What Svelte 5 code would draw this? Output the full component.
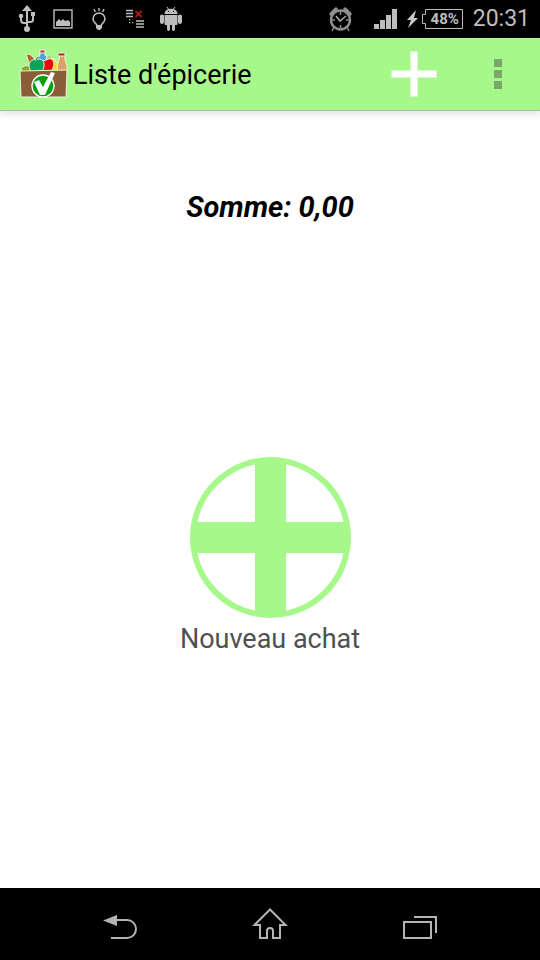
<script lang="ts">
  let total = $state(0);

  let formattedTotal = $derived(total.toFixed(2).replace(".", ","));
</script>

<div class="screen">
  <header class="status-bar">
    <div class="notifications">
      <svg class="status-icon" viewBox="0 0 24 24" aria-label="USB">
        <path d="M12 3v19M6 9v4q0 3 3 3h3M18 8v5q0 2-3 2h-3" fill="none" stroke="#bebebe" stroke-width="2" />
        <path d="M12-2 7 4h10z" fill="#bebebe" />
        <circle cx="6" cy="9" r="2.3" fill="#bebebe" />
        <path d="M16 5h4v4h-4z" fill="#bebebe" />
        <circle cx="12" cy="22" r="3" fill="#bebebe" />
      </svg>
      <svg class="status-icon" viewBox="0 0 24 24" aria-label="Image">
        <rect x="3" y="3" width="18" height="18" fill="none" stroke="#bebebe" stroke-width="1.4" />
        <path d="M5 19v-4l3-3 2 2 2-2 2 2 3-1 2 2v4z" fill="#bebebe" />
      </svg>
      <svg class="status-icon" viewBox="0 0 24 24" aria-label="Lampe">
        <path d="M10 19c0-3-4-3-4-7a6 6 0 0 1 12 0c0 4-4 4-4 7" fill="none" stroke="#bebebe" stroke-width="1.6" />
        <path d="M9 18h6v3l-2 2h-2l-2-2zM11.3 1h1.4v3h-1.4z" fill="#bebebe" />
        <path d="m7 2 1.3 3M17 2l-1.3 3" stroke="#bebebe" stroke-width="1.4" />
      </svg>
      <svg class="status-icon" viewBox="0 0 24 24" aria-label="Liste">
        <path d="M3 3.5h7M3 6.5h7M3 9.5h7M13 14h8M13 17h8M13 20h8" stroke="#bebebe" stroke-width="1.3" />
        <path d="m12.500 4 6 6M18.500 4l-6 6" stroke="#b01c1c" stroke-width="1.8" />
        <path d="M6 12h1.300v1.300H6zM6 15h1.300v1.300H6zM9 15h1.300v1.300H9z" fill="#bebebe" />
      </svg>
      <svg class="status-icon" viewBox="0 0 24 24" aria-label="Android">
        <path d="M5.5 7c0-7 13-7 13 0z" fill="#bebebe" />
        <path d="m8 0 2 3M16 0l-2 3" stroke="#bebebe" />
        <path d="M5.5 8h13v9q0 1-1 1H16v4q0 2-1.500 2T13 22v-4h-2v4q0 2-1.500 2T8 22v-4H6.500q-1 0-1-1zM1 9q0-1.500 2-1.500T5 9v6q0 2-2 2t-2-2zM19 9q0-1.500 2-1.500T23 9v6q0 2-2 2t-2-2z" fill="#bebebe" />
        <path d="M9 4h1v1H9zM14 4h1v1h-1z" fill="#000" />
      </svg>
    </div>

    <div class="system">
      <svg class="status-icon alarm" viewBox="0 0 24 24" aria-label="Alarme">
        <circle cx="12.500" cy="13" r="9.500" fill="none" stroke="#8f8f8f" stroke-width="2.400" />
        <path d="M3 7 8 2M22 7l-5-5" fill="none" stroke="#8f8f8f" stroke-width="3.500" stroke-linecap="round" />
        <path d="m6 20-2 4M19 20l2 4M12.500 5v3M12.500 18v3M4 13h3M18 13h3" stroke="#8f8f8f" stroke-width="1.500" />
        <path d="m8 9 4 5 6-5" fill="none" stroke="#a5a5a5" stroke-width="1.600" />
      </svg>
      <svg class="status-icon" viewBox="0 0 24 24" aria-label="Réseau">
        <path d="M0 17h5v5H0zM6 13h5v9H6zM12 8h5v14h-5zM18 2h5v20h-5z" fill="#bebebe" />
      </svg>
      <div class="battery">
        <svg class="bolt" viewBox="0 0 14 20" aria-label="En charge">
          <path d="M10 1 1 11h4L2 19 12 9H8z" fill="#c8c8c8" />
        </svg>
        <div class="battery-cell">
          <svg class="battery-outline" viewBox="0 0 42 20" aria-hidden="true">
            <path d="M3.500.5h37v19h-37v-5h-3v-9h3z" fill="none" stroke="#bebebe" />
          </svg>
          <span class="battery-level">48%</span>
        </div>
      </div>
      <time class="clock">20:31</time>
    </div>
  </header>

  <div class="app-bar">
    <svg class="app-logo" viewBox="0 0 48 48" aria-hidden="true">
      <g stroke="#e9f5e0">
        <path d="M6 4q4-1 8 4l5 8-8 3z" fill="#b5651d" />
        <path d="M16 9q2-5 5-2l3 12h-8z" fill="#78c850" />
        <path d="M20 5V1h5v4l4 4v9H17V9z" fill="#4ba3d8" />
        <path d="M20 0h5v3h-5z" fill="#e02030" />
        <path d="M27 5q4-2 5 5v8h-7z" fill="#9bdc6a" />
        <path d="M40 4h5v6l2 6v6H37v-6l2-6z" fill="#dca25f" />
        <path d="M38 3h7v3h-7z" fill="#b5202c" />
        <path d="M34 8q6 7 2 14h-8z" fill="#ffdf20" />
        <path d="M1 18q4-4 10-2v7H2z" fill="#8ba81e" />
        <path d="M26 10q7-4 8 4-1 7-6 9h-7V12z" fill="#f00808" />
        <path d="M16 10c5-3 9 1 8 6 0 4-3 7-6 7h-3c-4 0-6-4-6-8 1-5 4-6 7-5z" fill="#0aa55b" />
        <path d="m0 21 47-1-1 27H1z" fill="#8b5d36" />
      </g>
      <path d="m16 10 2-3" stroke="#176b2c" />
      <circle cx="23" cy="36" r="11" fill="#08a00e" stroke="#fff" stroke-width="1.3" />
      <path d="m14 32 5-2 4 7 8-15 4 1-10 22h-5z" fill="#fff" />
    </svg>
    <h1 class="app-title">Liste d'épicerie</h1>
    <button class="action" aria-label="Ajouter">
      <svg class="plus-icon" viewBox="0 0 46 46">
        <path d="M19 0h8v19h19v8H27v19h-8V27H0v-8h19z" fill="#d5fbc8" />
        <path d="M20 1h6v19h19v6H26v19h-6V26H1v-6h19z" fill="#fff" />
      </svg>
    </button>
    <button class="action" aria-label="Plus d'options">
      <svg class="more-icon" viewBox="0 0 8 30">
        <path d="M0 0h8v8H0zM0 11h8v8H0zM0 22h8v8H0z" fill="#79a869" />
      </svg>
    </button>
  </div>

  <main class="content">
    <p class="total">Somme: {formattedTotal}</p>
    <div class="empty">
      <button class="new-purchase">
        <svg class="circle-icon" viewBox="0 0 162 162" aria-hidden="true">
          <circle cx="81.5" cy="80.5" r="77.5" fill="none" stroke="#a7f88b" stroke-width="6" />
          <path d="M66 2h31v157H66zM3 65h157v31H3z" fill="#a7f88b" />
        </svg>
        <span>Nouveau achat</span>
      </button>
    </div>
  </main>

  <nav class="nav-bar">
    <button class="nav-button" aria-label="Retour">
      <svg class="nav-icon" viewBox="0 0 36 36">
        <path d="M14 10h11a9 9 0 0 1 0 18H9" fill="none" stroke="#b4b4b4" stroke-width="2" />
        <path d="M1 10.500 15 5v11z" fill="#b4b4b4" />
      </svg>
    </button>
    <button class="nav-button" aria-label="Accueil">
      <svg class="nav-icon" viewBox="0 0 36 36">
        <path d="M18 -.5 2.500 15H8v13h7v-7a3 3 0 0 1 6 0v7h7V15h5.500z" fill="none" stroke="#b4b4b4" stroke-width="2" />
      </svg>
    </button>
    <button class="nav-button" aria-label="Applications récentes">
      <svg class="nav-icon" viewBox="0 0 36 36">
        <path d="M2 12h27v16H2zM12 7h22v16" fill="none" stroke="#b4b4b4" stroke-width="2" />
      </svg>
    </button>
  </nav>
</div>

<style>
  :global(body) {
    margin: 0;
    background: #fff;
  }

  .screen {
    display: flex;
    flex-direction: column;
    min-height: 100vh;
    font-family: Roboto, "Noto Sans", sans-serif;
  }

  svg {
    display: block;
    flex: none;
    overflow: visible;
  }

  button {
    padding: 0;
    border: 0;
    background: none;
    font: inherit;
    cursor: pointer;
  }

  .status-bar {
    display: flex;
    align-items: center;
    justify-content: space-between;
    height: 38px;
    padding: 0 10px 0 15px;
    background: #000;
    color: #bebebe;
  }

  .notifications {
    display: flex;
    gap: 12px;
  }

  .system {
    display: flex;
    align-items: center;
  }

  .status-icon {
    width: 24px;
    height: 24px;
  }

  .alarm {
    margin-right: 22px;
  }

  .battery {
    display: flex;
    align-items: center;
    gap: 2px;
    margin: 0 9px 0 8px;
  }

  .bolt {
    width: 14px;
    height: 20px;
  }

  .battery-cell {
    display: grid;
    place-items: center;
  }

  .battery-outline,
  .battery-level {
    grid-area: 1 / 1;
  }

  .battery-outline {
    width: 42px;
    height: 20px;
  }

  .battery-level {
    padding-left: 4px;
    font-size: 15px;
    font-weight: 700;
    line-height: 20px;
  }

  .clock {
    font-size: 23px;
    line-height: 38px;
  }

  .app-bar {
    display: flex;
    align-items: center;
    height: 72px;
    padding-left: 20px;
    background: #a7f88b;
    border-bottom: 1px solid #b5b0b8;
    box-shadow: 0 2px 8px rgba(0, 0, 0, 0.15);
  }

  .app-logo {
    width: 48px;
    height: 48px;
  }

  .app-title {
    flex: 1;
    margin: 2px 0 0 5px;
    font-size: 27px;
    font-weight: 400;
    line-height: 32px;
    color: #000;
  }

  .action {
    display: grid;
    place-items: center;
    width: 84px;
    height: 72px;
  }

  .plus-icon {
    width: 46px;
    height: 46px;
  }

  .more-icon {
    width: 8px;
    height: 30px;
  }

  .content {
    display: flex;
    flex: 1;
    flex-direction: column;
    padding-top: 78px;
  }

  .total {
    margin: 0;
    font-size: 29px;
    font-style: italic;
    font-weight: 700;
    line-height: 36px;
    text-align: center;
    color: #000;
  }

  .empty {
    display: grid;
    flex: 1;
    place-items: center;
    padding-bottom: 2px;
  }

  .new-purchase {
    display: flex;
    flex-direction: column;
    align-items: center;
    gap: 4px;
    font-size: 27px;
    line-height: 32px;
    color: #505050;
  }

  .circle-icon {
    width: 162px;
    height: 162px;
  }

  .nav-bar {
    display: flex;
    justify-content: center;
    box-sizing: border-box;
    height: 72px;
    padding-top: 8px;
    background: #000;
  }

  .nav-button {
    display: grid;
    place-items: center;
    width: 150px;
  }

  .nav-icon {
    width: 36px;
    height: 36px;
  }
</style>
